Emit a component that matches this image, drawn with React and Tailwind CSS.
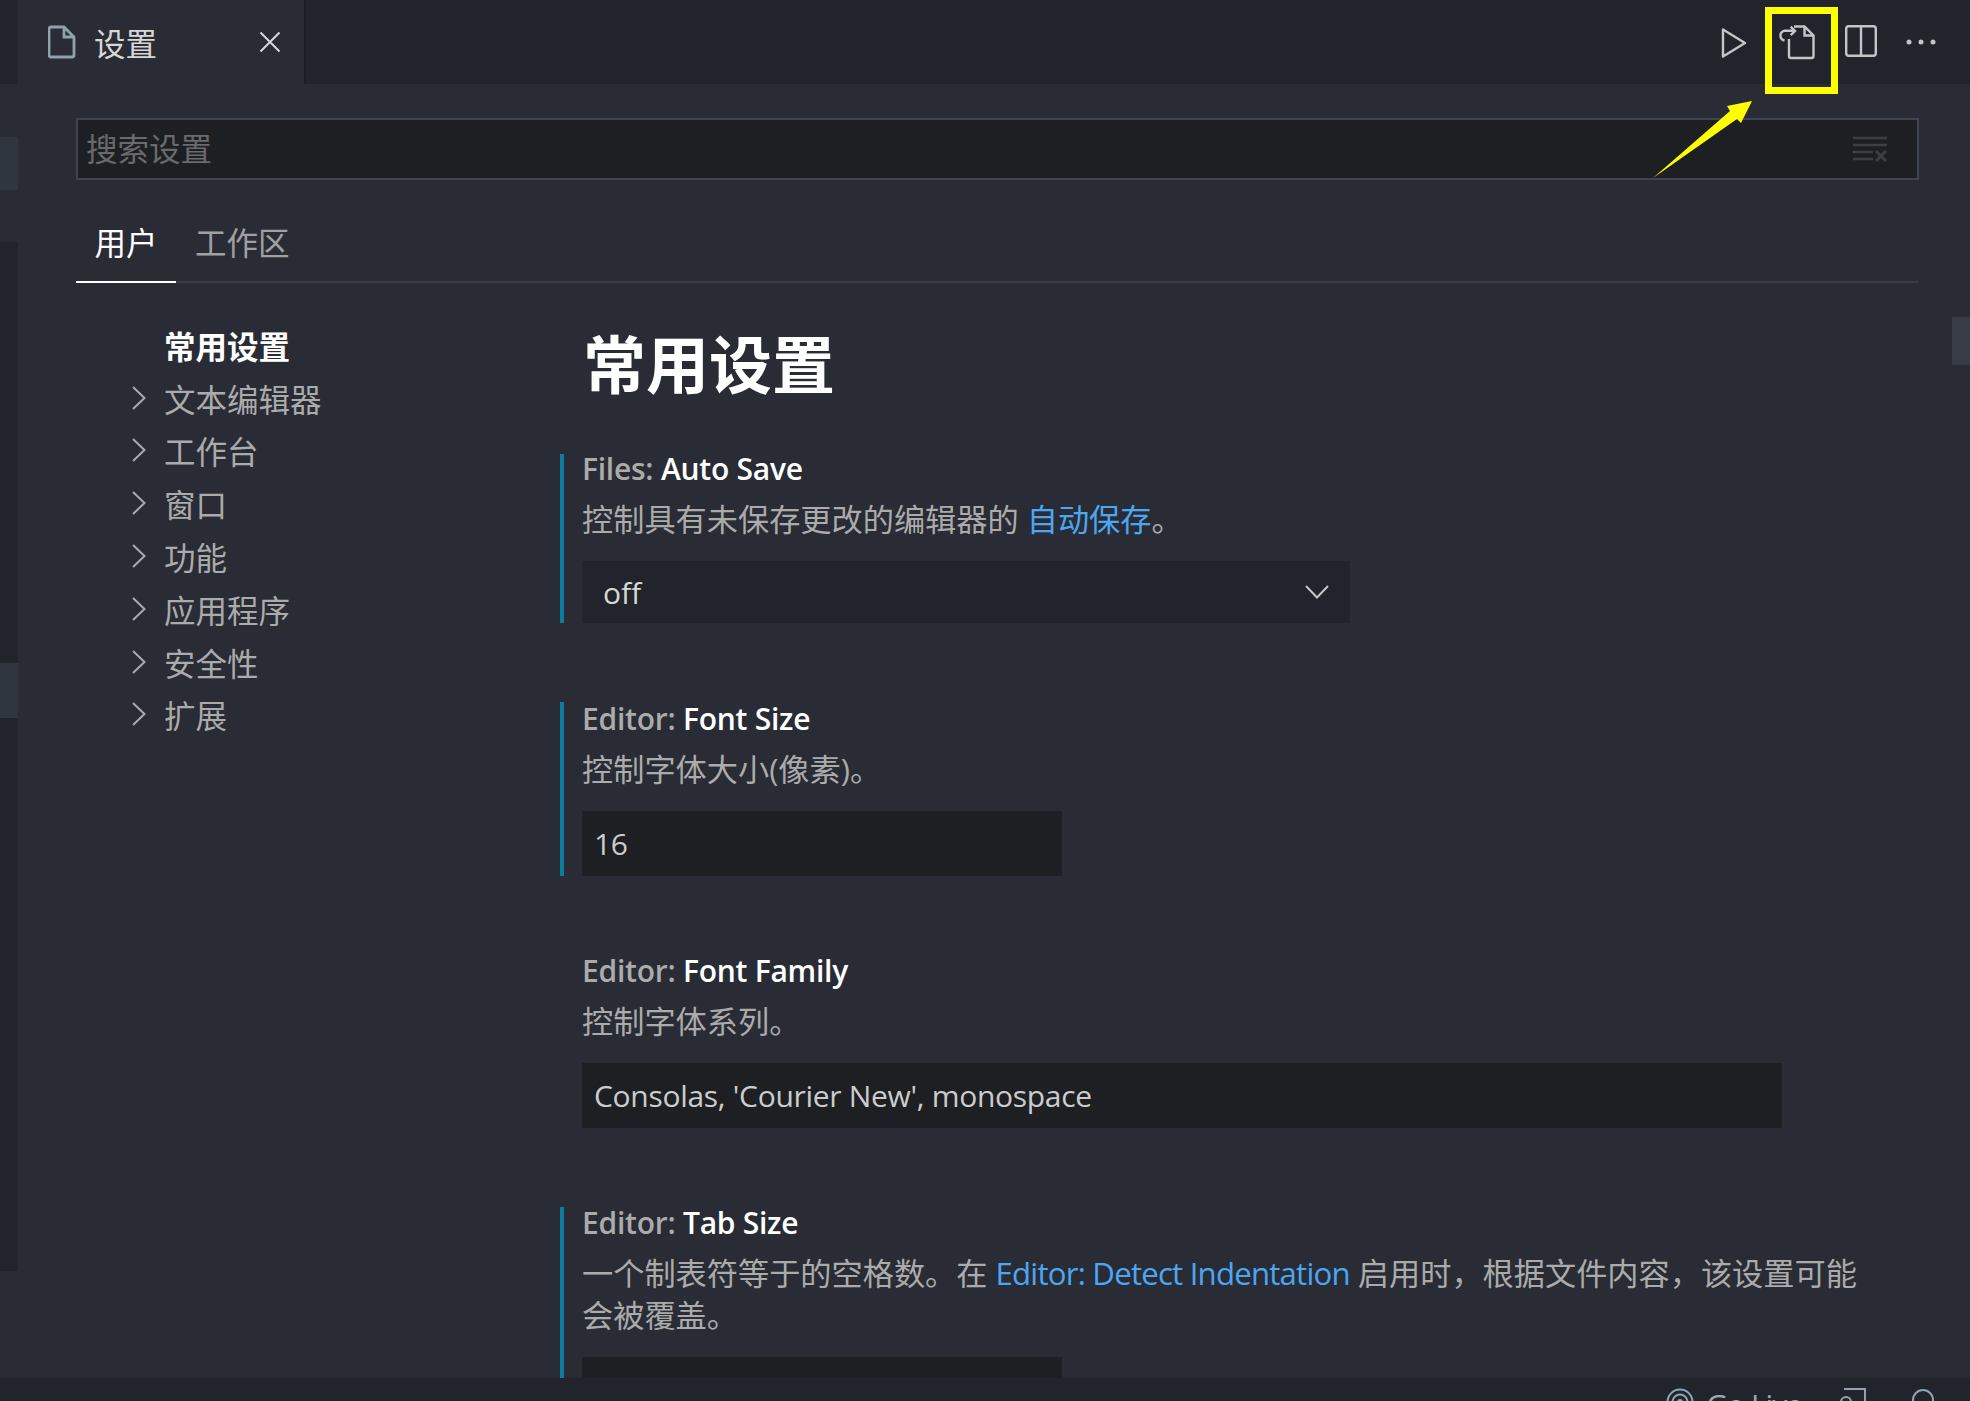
import React from 'react';

const FONT = '[font-family:"Open_Sans","Noto_Sans_CJK_SC",sans-serif]';

const NAV = ['文本编辑器', '工作台', '窗口', '功能', '应用程序', '安全性', '扩展'];

function Chevron() {
  return (
    <svg width="16" height="26" viewBox="0 0 16 26" fill="none" className="mt-[-3px]">
      <path d="M2 2 L13.5 13 L2 24" stroke="#ababab" strokeWidth="2" />
    </svg>
  );
}

function Label({ group, name }) {
  return (
    <div className="h-[30px] leading-[30px] text-[30px] tracking-[-0.25px] whitespace-nowrap font-semibold">
      <span className="text-[#ababab]">{group}: </span>
      <span className="text-white">{name}</span>
    </div>
  );
}

function Desc({ children }) {
  return <div className="mt-[14px] leading-[42px] text-[31.2px] text-[#ababab] whitespace-nowrap">{children}</div>;
}

function Link({ children }) {
  return <span className="text-[#4ca6f2]">{children}</span>;
}

function Input({ width, value }) {
  return (
    <div className={`mt-[21px] h-[65px] ${width} bg-[#1d1f23] px-3 flex items-center text-[30px] text-[#cccccc] whitespace-nowrap tracking-[-0.3px]`}>
      {value}
    </div>
  );
}

export default function App() {
  return (
    <div className={`w-[1970px] h-[1401px] flex flex-col overflow-hidden relative bg-[#292c35] ${FONT}`}>
      <div className="flex-1 min-h-0 flex">
        {/* activity bar leftovers */}
        <div className="w-[18px] shrink-0 flex flex-col">
          <div className="h-[84px] bg-[#21252b]" />
          <div className="h-[53px]" />
          <div className="h-[53px] bg-[#2f3640]" />
          <div className="h-[52px]" />
          <div className="h-[421px] bg-[#21252b]" />
          <div className="h-[55px] bg-[#2f3640]" />
          <div className="h-[553px] bg-[#21252b]" />
        </div>

        <div className="flex-1 min-w-0 flex flex-col relative">
          {/* tab bar */}
          <div className="h-[84px] shrink-0 bg-[#21252b] flex justify-between">
            <div className="w-[288px] bg-[#292c35] border-r-2 border-[#1b1d21] flex items-start relative">
              <svg width="28" height="34" viewBox="0 0 28 34" fill="none" className="ml-[30px] mt-[25px]">
                <path d="M3 2 H16 L26 12 V30 a2 2 0 0 1 -2 2 H3 a2 2 0 0 1 -2 -2 V4 a2 2 0 0 1 2 -2 Z M16 2 V12 H26" stroke="#8fa3ad" strokeWidth="2.8" />
              </svg>
              <span className="ml-[18px] mt-[22px] text-[31.5px] leading-[44px] text-[#d7d7d7]">设置</span>
              <svg width="22" height="22" viewBox="0 0 22 22" fill="none" className="absolute left-[241px] top-[31px]">
                <path d="M1.5 1.5 L20.5 20.5 M20.5 1.5 L1.5 20.5" stroke="#d7d7d7" strokeWidth="2" />
              </svg>
            </div>
            <div className="flex items-start">
              <svg width="26" height="32" viewBox="0 0 26 32" fill="none" className="mt-[27px] mr-[30px]">
                <path d="M2 2.5 L24 16 L2 29.5 Z" stroke="#c5c5c5" strokeWidth="2.4" strokeLinejoin="round" />
              </svg>
              <svg width="40" height="40" viewBox="0 0 40 40" fill="none" className="mt-[22px] mr-[28px]">
                <path d="M17 4.5 H27.5 L36.5 13.5 V34 a2 2 0 0 1 -2 2 H14 a2 2 0 0 1 -2 -2 V17 M27.5 4.5 V13.5 H36.5" stroke="#c5c5c5" strokeWidth="2.4" />
                <path d="M7.5 18.5 A5 5 0 0 1 7 8.8 H18 M13.7 4.7 L18 9 L13.7 13.2" stroke="#c5c5c5" strokeWidth="2.4" />
              </svg>
              <svg width="32" height="32" viewBox="0 0 32 32" fill="none" className="mt-[25px] mr-[29px]">
                <rect x="1.2" y="1.2" width="29.6" height="29.6" rx="2.5" stroke="#c5c5c5" strokeWidth="2.4" />
                <path d="M16 1 V31" stroke="#c5c5c5" strokeWidth="2.4" />
              </svg>
              <svg width="30" height="6" viewBox="0 0 30 6" className="mt-[39px] mr-[34px]">
                <circle cx="3" cy="3" r="2.5" fill="#c5c5c5" />
                <circle cx="15" cy="3" r="2.5" fill="#c5c5c5" />
                <circle cx="27" cy="3" r="2.5" fill="#c5c5c5" />
              </svg>
            </div>
          </div>

          {/* settings editor */}
          <div className="flex-1 min-h-0 overflow-hidden pl-[58px] pr-[51px] pt-[34px]">
            <div className="h-[62px] bg-[#1d1f23] border-2 border-[#3e4452] flex items-center justify-between pl-[8px] pr-[29px]">
              <span className="text-[31.5px] text-[#6a6a6a] leading-[44px]">搜索设置</span>
              <svg width="36" height="26" viewBox="0 0 36 26" fill="none">
                <path d="M1 2 H35 M1 9 H35 M1 16 H21 M1 23 H21" stroke="#3d3e42" strokeWidth="2.4" />
                <path d="M24 15 L34 25 M34 15 L24 25" stroke="#3d3e42" strokeWidth="3" />
              </svg>
            </div>

            <div className="mt-[29px] h-[74px] border-b-2 border-[#3d3d3d] flex">
              <div className="w-[100px] h-[74px] border-b-2 border-white flex justify-center pt-[12px] text-[31.5px] leading-[44px] text-white">用户</div>
              <div className="ml-[19px] pt-[12px] text-[31.5px] leading-[44px] text-[#a0a0a0]">工作区</div>
            </div>

            <div className="flex">
              <div className="w-[484px] shrink-0 pt-[37px]">
                <div className="h-[52.8px] pl-[88px] flex items-center text-[31.5px] font-bold text-white">常用设置</div>
                {NAV.map((item) => (
                  <div key={item} className="h-[52.8px] pl-[55px] flex items-center text-[31.5px] text-[#ababab]">
                    <Chevron />
                    <span className="ml-[17px]">{item}</span>
                  </div>
                ))}
              </div>

              <div className="flex-1 min-w-0">
                <h1 className="mt-[34px] ml-[23px] h-[137px] leading-[94px] text-[63px] font-bold text-white">常用设置</h1>

                <div className="border-l-4 border-[#0c7d9d] pl-[18px]">
                  <Label group="Files" name="Auto Save" />
                  <Desc>控制具有未保存更改的编辑器的 <Link>自动保存</Link>。</Desc>
                  <div className="mt-[21px] h-[62px] w-[768px] bg-[#21252b] flex items-center justify-between pl-[21px] pr-[21px] text-[30px] text-[#d7d7d7]">
                    <span>off</span>
                    <svg width="24" height="14" viewBox="0 0 24 14" fill="none">
                      <path d="M1 1 L12 12.5 L23 1" stroke="#c5c5c5" strokeWidth="2" />
                    </svg>
                  </div>
                </div>

                <div className="mt-[79px] border-l-4 border-[#0c7d9d] pl-[18px] pt-[2px]">
                  <Label group="Editor" name="Font Size" />
                  <Desc>控制字体大小(像素)。</Desc>
                  <Input width="w-[480px]" value="16" />
                </div>

                <div className="mt-[78px] border-l-4 border-transparent pl-[18px] pt-[2px]">
                  <Label group="Editor" name="Font Family" />
                  <Desc>控制字体系列。</Desc>
                  <Input width="w-[1200px]" value="Consolas, 'Courier New', monospace" />
                </div>

                <div className="mt-[79px] border-l-4 border-[#0c7d9d] pl-[18px] pt-[1px] h-[300px]">
                  <Label group="Editor" name="Tab Size" />
                  <Desc>
                    一个制表符等于的空格数。在 <span className="tracking-[-0.8px]"><Link>Editor: Detect Indentation</Link></span> 启用时，根据文件内容，该设置可能
                    <br />
                    会被覆盖。
                  </Desc>
                  <Input width="w-[480px]" value="" />
                </div>
              </div>
            </div>
          </div>

          {/* scrollbar thumb */}
          <div className="absolute right-0 top-[317px] w-[18px] h-[48px] bg-[#383c47]" />
        </div>
      </div>

      {/* status bar, cut off by the window edge */}
      <div className="h-[23px] shrink-0 bg-[#21252b] overflow-hidden flex justify-end items-start text-[#9da9b4]">
        <svg width="28" height="28" viewBox="0 0 28 28" fill="none" className="mt-[10px] mr-[12px] shrink-0">
          <circle cx="14" cy="14" r="12.5" stroke="#8fa3b5" strokeWidth="2" />
          <circle cx="14" cy="14" r="7.5" stroke="#8fa3b5" strokeWidth="2" />
          <circle cx="14" cy="14" r="3" fill="#8fa3b5" />
        </svg>
        <span className="mt-[7px] text-[30px] leading-[40px] whitespace-nowrap tracking-[-1px]">Go Live</span>
        <svg width="28" height="28" viewBox="0 0 28 28" fill="none" className="mt-[10px] ml-[38px] shrink-0">
          <path d="M4 1 H25 V24 H10" stroke="#8fa3b5" strokeWidth="2" />
          <circle cx="6" cy="14" r="5" stroke="#8fa3b5" strokeWidth="2" />
        </svg>
        <svg width="24" height="24" viewBox="0 0 24 24" fill="none" className="mt-[10px] ml-[43px] mr-[35px] shrink-0">
          <path d="M2 22 V12 a10 10 0 0 1 20 0 V22" stroke="#8fa3b5" strokeWidth="2" />
        </svg>
      </div>

      {/* yellow annotation */}
      <div className="absolute left-[1765px] top-[7px] w-[73px] h-[87px] border-[7px] border-[#ffff00]" />
      <svg width="120" height="100" viewBox="0 0 120 100" className="absolute left-[1645px] top-[90px]">
        <path d="M8 88 L85 21 L82 16 L107 11 L96 33 L92 29 Z" fill="#ffff00" />
      </svg>
    </div>
  );
}
